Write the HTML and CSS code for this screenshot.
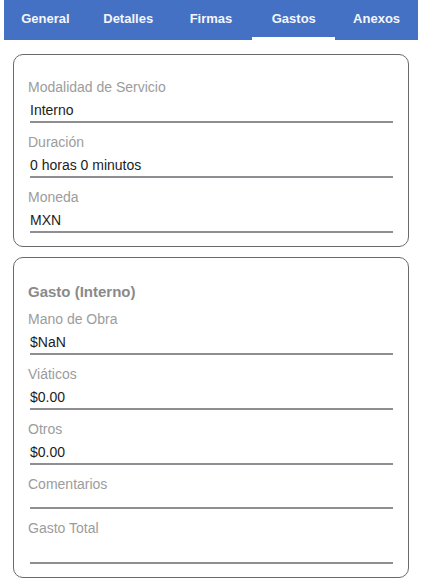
FILE: index.html
```html
<!DOCTYPE html>
<html lang="es">

<head>
    <meta charset="UTF-8">
    <meta name="viewport" content="width=device-width, initial-scale=1.0">
    <link rel="stylesheet" href="styles.css">
    <title>Gastos</title>
</head>

<body>
    <nav class="tabs">
        <div class="tab">General</div>
        <div class="tab">Detalles</div>
        <div class="tab">Firmas</div>
        <div class="tab active">Gastos</div>
        <div class="tab">Anexos</div>
    </nav>

    <div class="card">
        <div class="field">
            <div class="label">Modalidad de Servicio</div>
            <div class="value">Interno</div>
        </div>
        <div class="field">
            <div class="label">Duración</div>
            <div class="value">0 horas 0 minutos</div>
        </div>
        <div class="field">
            <div class="label">Moneda</div>
            <div class="value">MXN</div>
        </div>
    </div>

    <div class="card">
        <div class="title">Gasto (Interno)</div>
        <div class="field">
            <div class="label">Mano de Obra</div>
            <div class="value">$NaN</div>
        </div>
        <div class="field">
            <div class="label">Viáticos</div>
            <div class="value">$0.00</div>
        </div>
        <div class="field">
            <div class="label">Otros</div>
            <div class="value">$0.00</div>
        </div>
        <div class="field">
            <div class="label">Comentarios</div>
            <div class="value short"></div>
        </div>
        <div class="field">
            <div class="label">Gasto Total</div>
            <div class="value"></div>
        </div>
    </div>
</body>

</html>
```

FILE: styles.css
```css
body {
    margin: 0;
    background: #ffffff;
    font-family: "Liberation Sans", Arial, sans-serif;
}

.tabs {
    display: flex;
    margin: 0 4px;
    height: 40px;
    background: #4571c4;
}

.tab {
    flex: 1;
    display: flex;
    justify-content: center;
    padding-top: 11px;
    box-sizing: border-box;
    color: #f4f6fb;
    font-size: 13px;
    font-weight: bold;
    line-height: 15px;
}

.tab.active {
    border-bottom: 3px solid #ffffff;
}

.card {
    margin: 14px 13px 0 13px;
    padding: 13px 15px 13px 14px;
    border: 1px solid #6a6a6a;
    border-radius: 10px;
}

.card + .card {
    margin-top: 10px;
}

.title {
    margin-top: 12px;
    color: #8a8a8a;
    font-size: 15px;
    font-weight: bold;
    line-height: 17px;
}

.field {
    padding-top: 11px;
}

.label {
    color: #9c9c9c;
    font-size: 14px;
    line-height: 16px;
}

.value {
    margin: 7px 0 0 2px;
    padding-bottom: 3px;
    min-height: 16px;
    border-bottom: 2px solid #8e8e93;
    color: #1c1c1c;
    font-size: 14px;
    line-height: 16px;
}

.value.short {
    margin-top: 0;
    min-height: 12px;
}
```
